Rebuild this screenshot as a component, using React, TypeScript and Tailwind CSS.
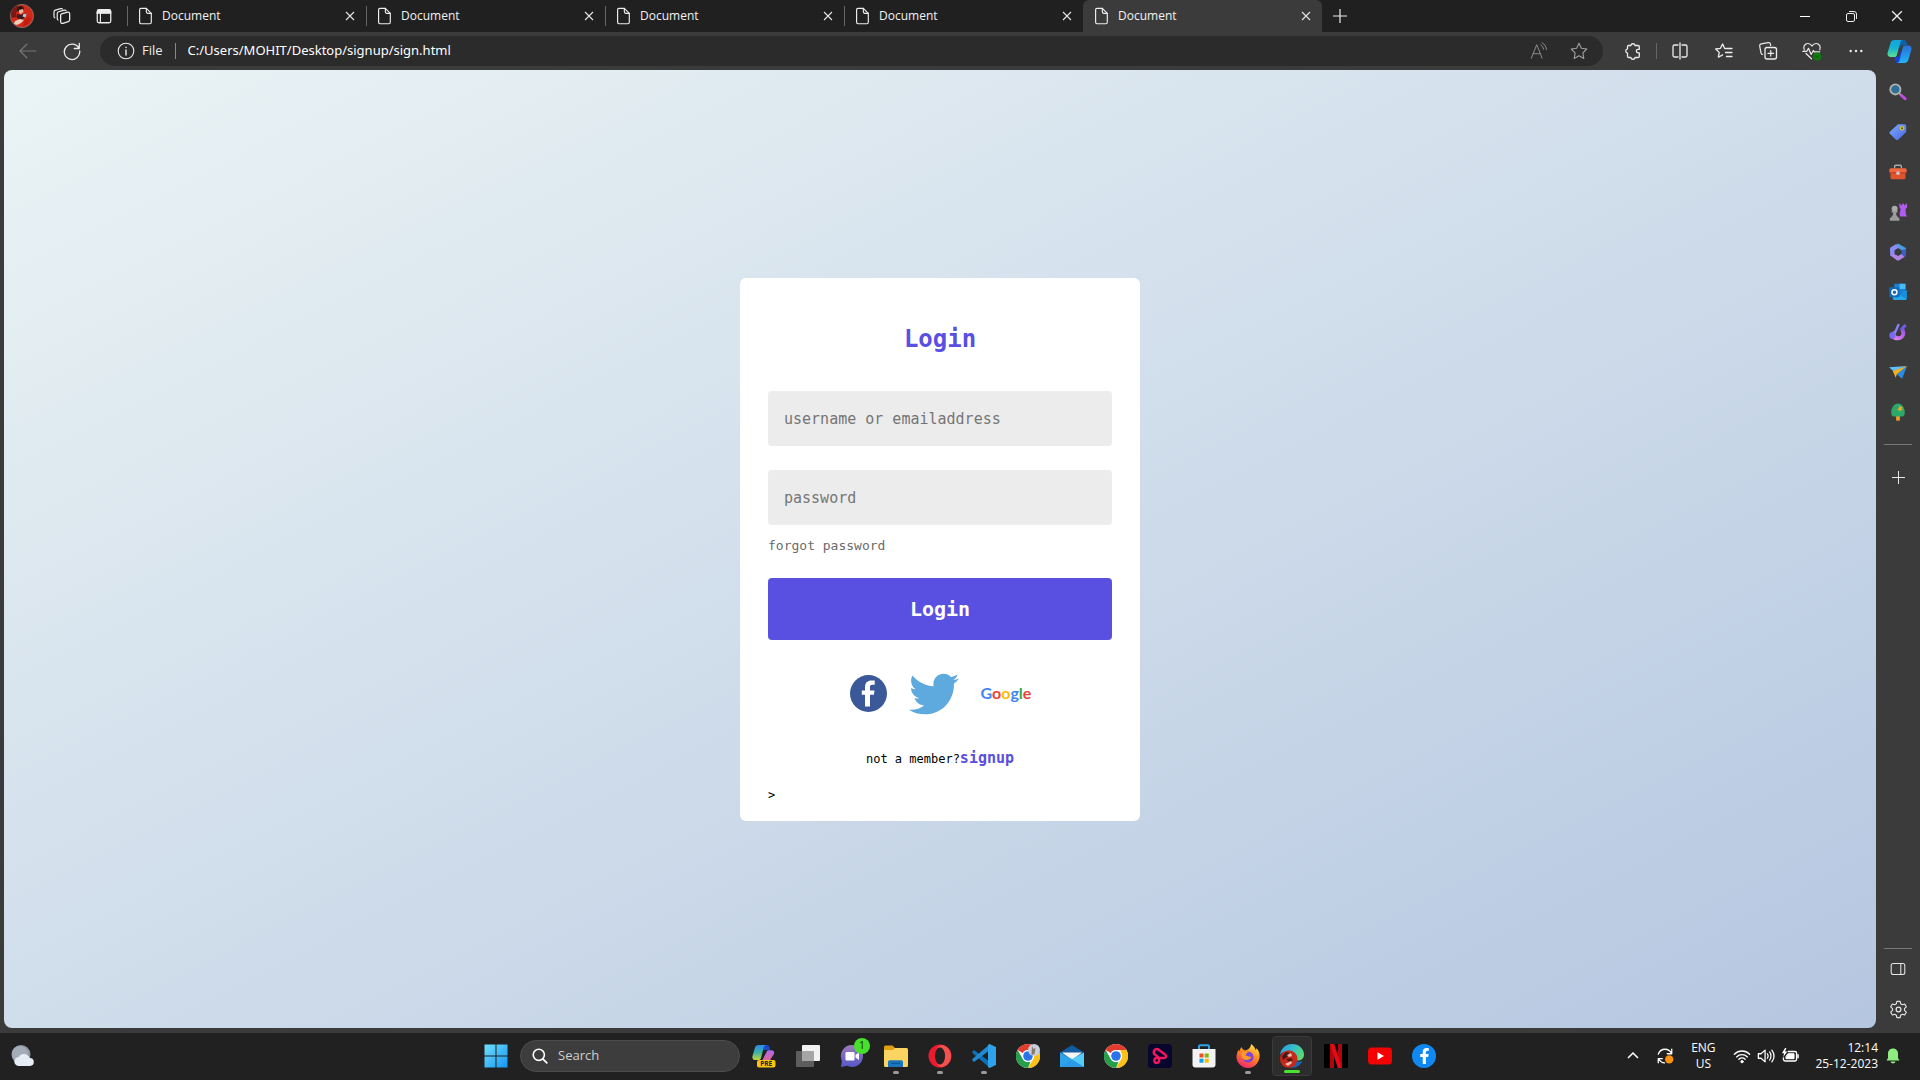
import React from "react";
import { FaTwitter, FaFacebookF } from "react-icons/fa";

const UI = "font-['Open_Sans','Noto_Sans',sans-serif]";
const MONO = "font-['DejaVu_Sans_Mono','Liberation_Mono',monospace]";

type IconProps = { size?: number; children: React.ReactNode; className?: string };

/** Thin-stroked icon on a 20-unit grid. */
function Line({ size = 20, children, className = "" }: IconProps) {
  return (
    <svg
      width={size}
      height={size}
      viewBox="0 0 20 20"
      fill="none"
      stroke="currentColor"
      strokeWidth="1.1"
      strokeLinecap="round"
      strokeLinejoin="round"
      className={className}
      aria-hidden="true"
    >
      {children}
    </svg>
  );
}

/** Filled icon on a 24-unit grid. */
function Art({ size = 24, children, className = "" }: IconProps) {
  return (
    <svg width={size} height={size} viewBox="0 0 24 24" className={className} aria-hidden="true">
      {children}
    </svg>
  );
}

function Avatar({ size = 24 }: { size?: number }) {
  return (
    <Art size={size}>
      <circle cx="12" cy="12" r="11.6" fill="#d22a18" stroke="#8b7a76" strokeWidth=".8" />
      <path d="M1 9C2 5 5 2 8 1.4L9 6 6 9l1 4-5 1C1.200 13 .8 11 1 9z" fill="#7a1a12" />
      <path d="M8 3c2-2 5-1 6 1l-1 3-4 1-2-3z" fill="#2b1512" />
      <path d="M9 6l4-1 .5 3-2.500 2-2-1z" fill="#e8b49c" />
      <path d="M7 10l4 1 3-2 2 3-4 4-5-2z" fill="#351d22" />
      <path d="M13.500 9.500l3 1-1 3-3-1z" fill="#b6c7d6" />
      <path d="M5 17l5-2 4 1-3 3-4 2-3-1z" fill="#f2cdb9" />
      <path d="M14 17l4-4 3 1-3 6-5 3z" fill="#c21d10" />
    </Art>
  );
}

function PageIcon() {
  return (
    <Line size={18} className="shrink-0">
      <path d="M5.500 1.500h6L17 7v10a1.600 1.600 0 0 1-1.600 1.600h-9.900A1.600 1.600 0 0 1 4 17V3.100A1.600 1.600 0 0 1 5.500 1.500z" strokeWidth="1.300" />
      <path d="M11.500 1.500V5.400A1.600 1.600 0 0 0 13 7h4" strokeWidth="1.300" />
    </Line>
  );
}

function CloseIcon({ size = 10 }: { size?: number }) {
  return (
    <svg width={size} height={size} viewBox="0 0 10 10" stroke="currentColor" strokeWidth="1.1" aria-hidden="true">
      <path d="M1 1l8 8M9 1L1 9" />
    </svg>
  );
}

function Tab({ active = false }: { active?: boolean }) {
  return (
    <div
      className={
        active
          ? "flex h-8 w-[239px] items-center rounded-t-md bg-[#3b3b3b] pr-1.5 pl-[9px]"
          : "flex h-8 w-[239px] items-center pr-1.5"
      }
    >
      {!active && <span className="mr-2 h-5 w-px bg-[#666]" />}
      <PageIcon />
      <span className="ml-2 flex-1 text-xs text-[#f2f2f2]">Document</span>
      <button aria-label="Close tab" className="flex h-5 w-5 items-center justify-center text-[#e6e6e6]">
        <CloseIcon />
      </button>
    </div>
  );
}

function TabStrip() {
  return (
    <header className="flex h-8 items-center bg-[#202020] text-[#ededed]">
      <button aria-label="Profile" className="flex w-11 justify-center">
        <Avatar />
      </button>
      <button aria-label="Workspaces" className="flex w-9 justify-center">
        <Line size={18}>
          <path d="M9.500 7.700l6.800-1.900c1.400-.3 2.200.3 2.200 1.600v6.800c0 1-.5 1.700-1.500 2l-6 1.900c-1.500.4-2.500-.2-2.500-1.600V9.300c0-.8.300-1.400 1-1.600z" strokeWidth="1.400" />
          <path d="M5.600 14.500c-.6-.3-.9-.8-.9-1.700V7.300c0-1 .5-1.700 1.500-2L12.500 3.500c.9-.2 1.600 0 2 .6" strokeWidth="1.300" />
          <path d="M2 12c-.6-.3-.9-.8-.9-1.700V5.500c0-1 .5-1.700 1.500-2L8.500 1.800c.9-.2 1.500-.1 2 .4" strokeWidth="1.300" />
        </Line>
      </button>
      <button aria-label="Tab actions" className="flex w-[47px] justify-center">
        <Line size={18}>
          <rect x="2.500" y="3" width="15" height="14.500" rx="2" strokeWidth="1.400" />
          <path d="M2.500 5.200A2.200 2.200 0 0 1 4.700 3h10.600a2.200 2.200 0 0 1 2.200 2.200V7h-15z" fill="currentColor" />
          <path d="M6 7v10" strokeWidth="1.300" />
        </Line>
      </button>
      <nav className="flex" aria-label="Tabs">
        <Tab />
        <Tab />
        <Tab />
        <Tab />
        <Tab active />
      </nav>
      <button aria-label="New tab" className="flex w-9 justify-center">
        <svg width="14" height="14" viewBox="0 0 14 14" stroke="currentColor" strokeWidth="1.200" aria-hidden="true">
          <path d="M7 0v14M0 7h14" />
        </svg>
      </button>
      <div className="ml-auto flex">
        <button aria-label="Minimize" className="flex h-8 w-[46px] items-center justify-center">
          <span className="h-px w-2.5 bg-white" />
        </button>
        <button aria-label="Restore" className="flex h-8 w-[46px] items-center justify-center">
          <svg width="11" height="11" viewBox="0 0 11 11" fill="none" stroke="currentColor" aria-hidden="true">
            <rect x=".5" y="2.500" width="8" height="8" rx="1.500" />
            <path d="M3 .5h5A2.500 2.500 0 0 1 10.500 3v5" />
          </svg>
        </button>
        <button aria-label="Close" className="flex h-8 w-[46px] items-center justify-center">
          <CloseIcon size={12} />
        </button>
      </div>
    </header>
  );
}

function CopilotIcon({ size = 25 }: { size?: number }) {
  return (
    <Art size={size}>
      <defs>
        <linearGradient id="cpA" x1="0" y1="0" x2="0" y2="1">
          <stop offset="0" stopColor="#12a5dc" />
          <stop offset=".5" stopColor="#18b3cf" />
          <stop offset="1" stopColor="#5fe08c" />
        </linearGradient>
        <linearGradient id="cpB" x1="0" y1="0" x2="0" y2="1">
          <stop offset="0" stopColor="#2a6fd6" />
          <stop offset="1" stopColor="#1fb4f6" />
        </linearGradient>
      </defs>
      <path d="M12 1h4c1.600 0 2.300 1 2.700 2.300L19.600 6h-4.400c-1.200 0-2 .6-2.300 1.700L12 10z" fill="#0f62a8" />
      <path d="M7 17h4l2-6 1 8-1 3.500c-.3.400-.8.500-1.200.5H10c-1.400 0-2-.8-2.400-2z" fill="#1b3fd0" />
      <path d="M7 1h8c-1.300.3-1.900 1.300-2.300 2.600L9.600 15c-.4 1.500-1.300 2.200-2.800 2.200H3.300C1 17.200 0 15.300.6 13L3.500 3.500C4 2 5.200 1 7 1z" fill="url(#cpA)" />
      <path d="M17 23H9.800c1.300-.3 1.900-1.300 2.300-2.600L15 8.500c.4-1.500 1.300-2.200 2.800-2.200h2.900c2.300 0 3.300 1.900 2.700 4.200l-2.900 9.500C20 22 18.800 23 17 23z" fill="url(#cpB)" />
    </Art>
  );
}

const toolBtn = "flex h-8 w-11 items-center justify-center";

function Toolbar() {
  return (
    <div className="flex h-[38px] items-center bg-[#3b3b3b] text-[#ededed]">
      <button aria-label="Back" className="flex w-14 justify-center text-[#777]">
        <Line size={20}>
          <path d="M18 10H2M9 3l-7 7 7 7" />
        </Line>
      </button>
      <button aria-label="Refresh" className="mr-3 flex w-8 justify-center">
        <Line size={20}>
          <path d="M17 7.500A7.700 7.700 0 1 0 17.700 10M17.300 2.500v5h-5" strokeWidth="1.300" />
        </Line>
      </button>
      <div className="flex h-[30px] flex-1 items-center rounded-full bg-[#2b2b2b] pr-1">
        <button className="flex items-center pl-4 text-[13px]">
          <Line size={20} className="mr-1.5">
            <circle cx="10" cy="10" r="7.800" />
            <path d="M10 9v5M10 6.200v.3" strokeWidth="1.400" />
          </Line>
          File
        </button>
        <span className="mx-3 h-4 w-px bg-[#888]" />
        <input
          aria-label="Address"
          defaultValue="C:/Users/MOHIT/Desktop/signup/sign.html"
          className="min-w-0 flex-1 bg-transparent font-['Noto_Sans',sans-serif] text-[13px] text-white outline-none"
        />
        <button aria-label="Read aloud" className="flex w-10 justify-center text-[#8c8c8c]">
          <Line size={18}>
            <path d="M1.500 18L7.500 3l6 15M3.500 13h8M12 3.500c1.800.8 2.800 2.300 2.900 4.500M13.500 1c2.900 1.300 4.500 3.900 4.700 7.500" />
          </Line>
        </button>
        <button aria-label="Add to favorites" className="flex w-10 justify-center text-[#a0a0a0]">
          <Line size={20}>
            <path d="M10 2.200l2.400 5 5.400.8-3.900 3.900.9 5.500-4.800-2.600-4.800 2.600.9-5.500L2.200 8l5.400-.8z" />
          </Line>
        </button>
      </div>
      <div className="flex items-center pl-2">
        <button aria-label="Extensions" className={toolBtn}>
          <Line size={20}>
            <path d="M5.500 4.500h2.300a2.200 2.200 0 0 1 4.300 0h2.900c.8 0 1.300.5 1.300 1.300V8.300h-1.200a1.700 1.700 0 0 0 0 3.600h1.200v3.300c0 .8-.5 1.300-1.300 1.300h-2.900a2.200 2.200 0 0 1-4.300 0H5.800c-.8 0-1.300-.5-1.300-1.300v-3a2.200 2.200 0 0 1 0-4.300V5.800c0-.8.400-1.300 1-1.300z" strokeWidth="1.300" />
          </Line>
        </button>
        <span className="mx-px h-4 w-px bg-[#666]" />
        <button aria-label="Split screen" className={toolBtn}>
          <Line size={20}>
            <path d="M8 4H4.500A1.500 1.500 0 0 0 3 5.500v9A1.500 1.500 0 0 0 4.500 16H8M12 4h3.500A1.500 1.500 0 0 1 17 5.500v9a1.500 1.500 0 0 1-1.500 1.500H12M10 2v16" strokeWidth="1.300" />
          </Line>
        </button>
        <button aria-label="Favorites" className={toolBtn}>
          <Line size={20}>
            <path d="M11.500 7.500h-.8L8.600 3 6.400 7.300l-4.700.7 3.500 3.400-.8 4.800 4.200-2.300M12.500 7.500H18M11.500 11.500H18M12.500 15.500H18" strokeWidth="1.300" />
          </Line>
        </button>
        <button aria-label="Collections" className={toolBtn}>
          <Line size={20}>
            <rect x="7" y="6.500" width="11.500" height="11.500" rx="2" strokeWidth="1.300" />
            <path d="M12.750 9.500v5.600M9.950 12.300h5.600M4.600 13.500c-.9-.2-1.400-.8-1.600-1.700L1.700 5.200c-.2-1.100.4-2 1.500-2.300l7-1.300c1.100-.2 2 .4 2.300 1.500l.2 1.200" strokeWidth="1.200" />
          </Line>
        </button>
        <button aria-label="Browser essentials" className={toolBtn}>
          <Line size={20}>
            <path d="M2.200 8.800C.8 5.300 3 2.500 5.800 2.500c1.800 0 3.200.9 4.200 2.500 1-1.600 2.400-2.500 4.200-2.500 2.800 0 5 2.800 3.600 6.300M.8 10.300h4l1.700-3 2.600 6.200 2.300-4 .9 1.300h5.400M4 12.500l5.500 5.300" strokeWidth="1.200" />
            <circle cx="15.300" cy="15.500" r="4" fill="#0f7b0f" stroke="none" />
            <path d="M13.800 15.500l1.100 1.100 2-2.200" stroke="#0a4d0a" strokeWidth=".8" />
          </Line>
        </button>
        <button aria-label="Settings and more" className={toolBtn}>
          <svg width="14" height="4" viewBox="0 0 14 4" fill="currentColor" aria-hidden="true">
            <circle cx="1.700" cy="2" r="1.200" />
            <circle cx="7" cy="2" r="1.200" />
            <circle cx="12.300" cy="2" r="1.200" />
          </svg>
        </button>
        <button aria-label="Copilot" className="flex h-8 w-[42px] items-center justify-center">
          <CopilotIcon />
        </button>
      </div>
    </div>
  );
}

const sideIcons: { label: string; art: React.ReactNode }[] = [
  {
    label: "Search",
    art: (
      <>
        <path d="M16 16l5.500 5" stroke="#c54be8" strokeWidth="4" strokeLinecap="round" />
        <path d="M13 13l3 3" stroke="#999" strokeWidth="2" />
        <circle cx="8.500" cy="8.500" r="6.800" fill="#2d6f96" stroke="#b5b3ae" strokeWidth="2.400" />
      </>
    ),
  },
  {
    label: "Shopping",
    art: (
      <>
        <defs>
          <linearGradient id="tag" x1="0" y1="0" x2="1" y2="1">
            <stop offset="0" stopColor="#7cb0ff" />
            <stop offset="1" stopColor="#4b62e4" />
          </linearGradient>
        </defs>
        <path d="M12 1.500h8.500A2.500 2.500 0 0 1 23 4v8L12.500 22a2.500 2.500 0 0 1-3.500 0L1.500 14.700a2.500 2.500 0 0 1 0-3.500z" fill="url(#tag)" />
        <circle cx="17.500" cy="7" r="2.300" fill="#4b5a35" stroke="#e6c62b" strokeWidth="1.600" />
      </>
    ),
  },
  {
    label: "Tools",
    art: (
      <>
        <path d="M7.500 7V4.500C7.500 3.500 8 3 9 3h6c1 0 1.500.5 1.500 1.500V7" fill="none" stroke="#aaa" strokeWidth="1.800" />
        <rect x="2" y="12" width="20" height="9.500" rx="1.500" fill="#e0532c" />
        <rect x=".5" y="7" width="23" height="6.500" rx="2" fill="#f2673d" />
        <rect x=".5" y="12.500" width="23" height="1.300" fill="#a93517" />
        <circle cx="12" cy="13.500" r="2.400" fill="#c9c9c9" />
      </>
    ),
  },
  {
    label: "Games",
    art: (
      <>
        <path d="M13.500 1h2v2h2V1h2.500v2h2V1h2v5l-2 2 .5 7 1.500 3h-9l-1-3 1.500-7-1.500-2z" fill="#b15cf0" />
        <circle cx="7.500" cy="7.500" r="4" fill="#aaa" />
        <path d="M3.500 10.500h8v2h-2c0 3 .5 5 3.500 7 1.500 1 1.500 4 0 4H2c-1.500 0-1.500-3 0-4 3-2 3.500-4 3.500-7h-2z" fill="#9b9b9b" />
      </>
    ),
  },
  {
    label: "Microsoft 365",
    art: (
      <>
        <path d="M12 .5L22.500 6.500v6.500l-6-3.500-4.500-2.500-4.500 2.500v5l-6-3.500V6.500z" fill="#4a9ddf" />
        <path d="M9 1.500L2.500 5.500c-.7.5-1 1-1 1.700v9.300l6 3V9.500L13 6z" fill="#8f8af0" />
        <path d="M22.500 7.500v9c0 .7-.3 1.200-1 1.600L12 23.500l-4-3 8.500-6v-5z" fill="#3c5ec9" />
        <path d="M2 16.500l5.500-2L12 17l4.500-2.500 4 4-7 4.500c-1 .5-2 .5-3 0z" fill="#b384e4" />
        <path d="M12 7l4.500 2.500v5L12 17l-4.500-2.500v-5z" fill="#3b3b3b" />
      </>
    ),
  },
  {
    label: "Outlook",
    art: (
      <>
        <rect x="7" y="1" width="15" height="14" rx="1" fill="#1a80d6" />
        <path d="M14 1h8v7h-8z" fill="#46bdf2" />
        <path d="M5 12l9.500 4L23.500 9v12a1.500 1.500 0 0 1-1.500 1.500H6.500A1.500 1.500 0 0 1 5 21z" fill="#28a8ea" />
        <path d="M14.500 16l9-6v11.500z" fill="#1490df" />
        <rect x=".5" y="5.500" width="13.500" height="13.500" rx="1.300" fill="#0f6cbd" />
        <circle cx="7.300" cy="12.200" r="3.300" fill="none" stroke="#fff" strokeWidth="2" />
      </>
    ),
  },
  {
    label: "Designer",
    art: (
      <>
        <defs>
          <linearGradient id="des" x1="0" y1="1" x2="1" y2="0">
            <stop offset="0" stopColor="#f08cf0" />
            <stop offset="1" stopColor="#9a4be8" />
          </linearGradient>
        </defs>
        <path d="M20.500 8.500c3.500 6-1 14.500-9 14.500C6 23 2.500 20 2 15.500 4 12 7 10 10 9l10.500-.5z" fill="url(#des)" />
        <circle cx="12.500" cy="13.500" r="4" fill="#3b3b3b" />
        <path d="M9 8.500h7l-1 4-6 2z" fill="#3b3b3b" />
        <path d="M12.500 2.500L7.500 14" stroke="#8c84f5" strokeWidth="3" strokeLinecap="round" />
        <ellipse cx="4.500" cy="16.500" rx="4" ry="4.500" fill="#7a68ee" />
        <path d="M22 1l.5 2.500L24 5l-2.500.8L20 9l-3 1-2.500-2L17 5l2-2z" fill="#6c5de8" />
      </>
    ),
  },
  {
    label: "Drop",
    art: (
      <>
        <path d="M24 4l-6.500 17-7.500-6.500z" fill="#2b8be6" />
        <path d="M0 5.500L24 4 6 11z" fill="#5fbdf7" />
        <path d="M5 10.500L24 4 10.500 14.500 9 19.500z" fill="#f5b21f" />
      </>
    ),
  },
  {
    label: "E-tree",
    art: (
      <>
        <rect x="9.500" y="17" width="5" height="6.500" fill="#f0a020" />
        <path d="M12 .5c6 0 9.500 7 9 13 0 3-2 4.500-4.500 4.500h-9C5 18 3 16.500 3 13.500 2.500 7.500 6 .5 12 .5z" fill="#2ea86a" />
        <path d="M14 3l1.500 2 2.500.2-.8 2.300 1 2.300-2.500-.1L14 11.500l-.8-2-2.200-.9 2-1.500z" fill="#f2a51e" />
      </>
    ),
  },
];

const sideBtn = "flex h-10 w-full items-center justify-center";

function Sidebar() {
  return (
    <aside className="flex w-11 flex-col items-center pt-0.5 pb-1 text-[#e6e6e6]">
      {sideIcons.map((item) => (
        <button key={item.label} aria-label={item.label} className={sideBtn}>
          <Art size={18}>{item.art}</Art>
        </button>
      ))}
      <span className="my-3 h-px w-7 bg-[#777]" />
      <button aria-label="Customize" className={sideBtn}>
        <svg width="13" height="13" viewBox="0 0 13 13" stroke="currentColor" aria-hidden="true">
          <path d="M6.500 0v13M0 6.500h13" />
        </svg>
      </button>
      <span className="mt-auto h-px w-7 bg-[#777]" />
      <button aria-label="Hide sidebar" className={sideBtn}>
        <Line size={16}>
          <rect x="1.500" y="3" width="17" height="14" rx="2.500" strokeWidth="1.300" />
          <path d="M13.500 3v14" strokeWidth="1.300" />
        </Line>
      </button>
      <button aria-label="Sidebar settings" className={sideBtn}>
        <Line size={19}>
          <circle cx="10" cy="10" r="2.500" strokeWidth="1.300" />
          <path d="M8.300 1.500h3.400l.6 2.500 1.700 1 2.500-.8 1.700 3-1.900 1.800v2l1.900 1.800-1.700 3-2.500-.8-1.700 1-.6 2.500H8.300L7.700 16 6 15l-2.500.8-1.700-3L3.700 11V9L1.800 7.200l1.700-3L6 5l1.700-1z" strokeWidth="1.200" />
        </Line>
      </button>
    </aside>
  );
}

const field =
  "h-[55px] w-full rounded bg-[#ececec] px-4 pt-0.5 text-[15px] text-[#333] outline-none placeholder:text-[#757575]";

function LoginCard() {
  return (
    <form
      className={`${MONO} flex w-[400px] flex-col rounded-md bg-white px-7 pt-[45px] pb-4 text-black`}
      onSubmit={(e) => e.preventDefault()}
    >
      <h1 className="mb-9 text-center text-2xl font-bold text-[#5950e2]">Login</h1>
      <input aria-label="username or emailaddress" placeholder="username or emailaddress" className={field} />
      <input type="password" aria-label="password" placeholder="password" className={`${field} mt-6`} />
      <a href="#forgot" className="mt-[11px] self-start text-[13px] leading-5 text-[#6b6b6b]">
        forgot password
      </a>
      <button className="mt-[22px] h-[62px] w-full rounded bg-[#5950e2] text-xl font-bold text-white">Login</button>
      <div className="mt-7 flex h-[52px] items-center justify-center gap-[22px]">
        <a href="#facebook" aria-label="Facebook">
          <svg width="37" height="37" viewBox="0 0 37 37" aria-hidden="true">
            <circle cx="18.500" cy="18.500" r="18.500" fill="#3b5998" />
            <path d="M15 31.500V19.800h-3.200v-4.300H15v-3.300c0-4.700 2.600-6.800 6.500-6.800 1.300 0 2.500.1 3.200.2v4.100h-2.300c-1.900 0-2.400.9-2.400 2.300v3.500h4.500l-.6 4.300H20v11.700z" fill="#fff" />
          </svg>
        </a>
        <a href="#twitter" aria-label="Twitter">
          <FaTwitter size={50} color="#5ea9dd" aria-hidden="true" />
        </a>
        <a href="#google" className="mb-0.5 w-[50px] font-['Lato',sans-serif] text-base leading-6 font-bold">
          <span className="text-[#4285f4]">G</span>
          <span className="text-[#ea4335]">o</span>
          <span className="text-[#fbbc05]">o</span>
          <span className="text-[#4285f4]">g</span>
          <span className="text-[#34a853]">l</span>
          <span className="text-[#ea4335]">e</span>
        </a>
      </div>
      <p className="mt-7 text-center text-xs leading-5">
        not a member?
        <a href="#signup" className="text-[15px] font-bold text-[#5950e2]">
          signup
        </a>
      </p>
      <p className="mt-4 text-xs leading-5">&gt;</p>
    </form>
  );
}

function ChromeArt() {
  return (
    <>
      <circle cx="12" cy="12" r="12" fill="#fff" />
      <path d="M12 0a12 12 0 0 1 10.400 6H12a6 6 0 0 0-5.200 3L1.600 6A12 12 0 0 1 12 0z" fill="#e33b2e" />
      <path d="M22.400 6A12 12 0 0 1 12 24l5.200-9A6 6 0 0 0 17.200 9l-.9-3z" fill="#fbc116" />
      <path d="M1.600 6l5.200 9a6 6 0 0 0 5.200 3l2.600-.6L12 24A12 12 0 0 1 1.600 6z" fill="#269f4b" />
      <circle cx="12" cy="12" r="6" fill="#fff" />
      <circle cx="12" cy="12" r="4.800" fill="#2a73e8" />
    </>
  );
}

type App = { label: string; art: React.ReactNode; state?: "open" | "active"; badge?: string };

const apps: App[] = [
  {
    label: "Copilot preview",
    art: (
      <>
        <defs>
          <linearGradient id="pvA" x1="0" y1="0" x2="0" y2="1">
            <stop offset="0" stopColor="#2c8be8" />
            <stop offset=".5" stopColor="#3ab4a4" />
            <stop offset="1" stopColor="#c5d63a" />
          </linearGradient>
          <linearGradient id="pvB" x1="0" y1="0" x2="0" y2="1">
            <stop offset="0" stopColor="#a76bf0" />
            <stop offset="1" stopColor="#f0647e" />
          </linearGradient>
        </defs>
        <path d="M11 1h4c1.500 0 2 1 2.500 2.500L18 6h-7z" fill="#1c49c8" />
        <path d="M6.500 1H14c-1.500.5-2 1.500-2.300 2.600L9 14c-.4 1.500-1.300 2-2.800 2H3C.8 16 0 14.300.5 12L3 3.500C3.500 2 4.800 1 6.500 1z" fill="url(#pvA)" />
        <path d="M16 19H9l5.500-11c.5-1.300 1.300-1.700 2.500-1.700h2.500c2.300 0 3 1.500 2.500 3.700z" fill="url(#pvB)" />
        <rect x="5" y="16" width="18.500" height="7.500" rx="2" fill="#fbc40f" />
        <text x="14.200" y="22.200" textAnchor="middle" fontSize="6.500" fontWeight="700" fill="#222">
          PRE
        </text>
      </>
    ),
  },
  {
    label: "Task view",
    art: (
      <>
        <rect x="6" y="1" width="18" height="16" rx="1" fill="#f2f2f2" />
        <rect x="0" y="7" width="18" height="16" rx="1" fill="#5d5d5d" />
        <path d="M6 7h12v10H6z" fill="#a5a5a5" />
      </>
    ),
  },
  {
    label: "Chat",
    badge: "1",
    art: (
      <>
        <defs>
          <linearGradient id="chat" x1="0" y1="0" x2="0" y2="1">
            <stop offset="0" stopColor="#9d7bb8" />
            <stop offset="1" stopColor="#5558c9" />
          </linearGradient>
        </defs>
        <path d="M12 1a11 11 0 1 1-5 20.800L1.500 23 1 22l1-5A11 11 0 0 1 12 1z" fill="url(#chat)" />
        <rect x="5.500" y="8" width="9" height="8.500" rx="1.300" fill="#fff" />
        <path d="M15.500 11l3.500-2.500v7.500l-3.500-2.500z" fill="#fff" />
      </>
    ),
  },
  {
    label: "File Explorer",
    state: "open",
    art: (
      <>
        <path d="M0 3a1.500 1.500 0 0 1 1.500-1.500h7L11 4H23v4H0z" fill="#e0a010" />
        <path d="M0 6h9l2-2h11.500A1.500 1.500 0 0 1 24 5.500v16a1.500 1.500 0 0 1-1.500 1.500h-21A1.500 1.500 0 0 1 0 21.500z" fill="#fcd462" />
        <path d="M4 23v-5a1.800 1.800 0 0 1 1.800-1.800h11.400A1.800 1.800 0 0 1 19 18v5z" fill="#1877bd" />
        <path d="M7 19.300h9" stroke="#0d5a94" strokeWidth="1.300" />
      </>
    ),
  },
  {
    label: "Opera",
    state: "open",
    art: (
      <>
        <circle cx="12" cy="12" r="11.500" fill="#e81c2e" />
        <path d="M15 1a11.500 11.500 0 0 1 0 22c-3 .3-5-1-6-3 5 2 8-2 8-8s-3-10-8-8c1-2 3-3 6-3z" fill="#f0524f" />
        <ellipse cx="12" cy="12" rx="5" ry="8.500" fill="#222" />
      </>
    ),
  },
  {
    label: "Visual Studio Code",
    state: "open",
    art: (
      <>
        <path d="M0 8l2-2 16 12v6L1 9.500z" fill="#0f6fb8" />
        <path d="M0 16l2 2L18 6V0L1 14.500z" fill="#2288d2" />
        <path d="M17.500 0L24 3v18l-6.500 3-1.500-1V1z" fill="#2ea3ec" />
      </>
    ),
  },
  {
    label: "Chrome profile",
    art: (
      <>
        <ChromeArt />
        <circle cx="18" cy="6" r="6" fill="#c7d0dc" />
        <path d="M16 2l1.500 3 2-1-1 6-3 1z" fill="#867968" />
      </>
    ),
  },
  {
    label: "Mail",
    art: (
      <>
        <path d="M0 8.500L12 1l12 7.500v3H0z" fill="#115a9e" />
        <path d="M2 8.500h20L12 16z" fill="#f5f5f5" />
        <path d="M0 8.500l24 13V23H0z" fill="#2da4ea" />
        <path d="M24 8.500V23L11 15.500z" fill="#55cdf8" />
        <path d="M0 23l12-7.500L24 23z" fill="#2b9be8" />
      </>
    ),
  },
  { label: "Chrome", art: <ChromeArt /> },
  {
    label: "Clipchamp",
    art: (
      <>
        <rect width="24" height="24" rx="3.500" fill="#06062f" />
        <path
          d="M6 10C5 6 8 3.500 11 6l6 4.500c2 1.700 1 3.500-1 3.500H9c-3.500 0-3.500 5-.5 5 2.500 0 3-2.500 2.500-4.500C10.500 12 7 11 6.500 10"
          fill="none"
          stroke="#f5165e"
          strokeWidth="2.400"
          strokeLinecap="round"
          strokeLinejoin="round"
        />
      </>
    ),
  },
  {
    label: "Microsoft Store",
    art: (
      <>
        <path d="M7 6V2.500C7 1.800 7.300 1.300 8 1.300h8c.7 0 1 .5 1 1.200V6" fill="none" stroke="#2da4e8" strokeWidth="2" />
        <path d="M.5 5h23v15.500a3 3 0 0 1-3 3h-17a3 3 0 0 1-3-3z" fill="#f3f3f3" />
        <path d="M7.500 9.500h4v4h-4z" fill="#f25022" />
        <path d="M12.700 9.500h4v4h-4z" fill="#7fba00" />
        <path d="M7.500 14.700h4v4h-4z" fill="#0aa0ea" />
        <path d="M12.700 14.700h4v4h-4z" fill="#ffb900" />
      </>
    ),
  },
  {
    label: "Firefox",
    state: "open",
    art: (
      <>
        <defs>
          <linearGradient id="ff" x1=".8" y1="0" x2=".3" y2="1">
            <stop offset="0" stopColor="#ffe84a" />
            <stop offset=".45" stopColor="#ff8a1e" />
            <stop offset="1" stopColor="#f5246e" />
          </linearGradient>
        </defs>
        <path d="M15 0c3 2 4 4 4.500 6 1-.5 1-1.500 1-2C23 7 24 10 23.500 13.500 22.500 19.500 18 24 12 24S.5 19 .5 13c0-3 1-5 2-7.500l.5 2C4 6 4.500 4 5.500 3c.5 2 2 3 3.500 3.500 3-.5 6-3 6-6.500z" fill="url(#ff)" />
        <circle cx="12" cy="13" r="5.500" fill="#7b45d8" />
        <path d="M5 9c2-2 5-1.500 7.500-.5-2 .5-3 1.500-3 3 3 0 3 2 6 1-1 4-7 5-9.500 1z" fill="#ff9a28" />
      </>
    ),
  },
  {
    label: "Edge",
    state: "active",
    art: (
      <>
        <defs>
          <linearGradient id="edge" x1="0" y1=".3" x2="1" y2=".7">
            <stop offset="0" stopColor="#2aa0dc" />
            <stop offset=".5" stopColor="#35c1c9" />
            <stop offset="1" stopColor="#62dc62" />
          </linearGradient>
        </defs>
        <path d="M9 23c6 2 11-1 13.500-6-4 2-9 0-8-4L6 10z" fill="#1565b8" />
        <path d="M0 11C.5 4.500 6 0 12 0c7 0 12 5 12 10.500 0 4-3 6-6.500 6-3 0-4-1-3-2.500 2-3-1-6.500-5-6.500S1.500 8 0 11z" fill="url(#edge)" />
        <circle cx="8.700" cy="15" r="8.700" fill="#c8281a" />
        <path d="M2 12l4-4 4 1-3 4-4 3zM6 15l5-1 2 2-4 2z" fill="#4a1512" />
        <path d="M7 11l4-2 1 3-3 1zM5 20l6-3 1 2-4 3z" fill="#e8bda9" />
      </>
    ),
  },
  {
    label: "Netflix",
    art: (
      <>
        <path d="M0 0h24v24H0z" fill="#000" />
        <path d="M6 0h4v24H6zM14 0h4v24h-4z" fill="#b00610" />
        <path d="M6 0h4.200L18 24h-4.200z" fill="#e50914" />
      </>
    ),
  },
  {
    label: "YouTube",
    art: (
      <>
        <rect x="0" y="3.500" width="24" height="17" rx="4" fill="#f60002" />
        <path d="M9.500 8.300l6.500 3.700-6.500 3.700z" fill="#fff" />
      </>
    ),
  },
  {
    label: "Facebook",
    art: (
      <>
        <circle cx="12" cy="12" r="12" fill="#0f88f2" />
        <g transform="translate(4.500 4)">
          <FaFacebookF size={16} color="#fff" />
        </g>
      </>
    ),
  },
];

function TaskApp({ app }: { app: App }) {
  const active = app.state === "active";
  return (
    <button
      aria-label={app.label}
      className={
        active
          ? "relative mx-0.5 flex h-10 w-10 items-center justify-center rounded border border-[#3a3a3a] bg-[#2d2d2d]"
          : "relative flex h-10 w-11 items-center justify-center"
      }
    >
      <Art>{app.art}</Art>
      {app.state === "open" && <span className="absolute bottom-0.5 h-[3px] w-1.5 rounded-full bg-[#9a9a9a]" />}
      {active && <span className="absolute bottom-0.5 h-[3px] w-4 rounded-full bg-[#4be331]" />}
      {app.badge && (
        <span className="absolute top-0.5 right-1 flex h-4 w-4 items-center justify-center rounded-full bg-[#47e02c] text-[11px] text-[#14350c]">
          {app.badge}
        </span>
      )}
    </button>
  );
}

function Taskbar() {
  return (
    <footer className="flex h-[47px] items-center bg-[#212121] pb-0.5 text-white">
      <div className="flex flex-1 items-center px-2.5">
        <button aria-label="Weather">
          <Art size={24}>
            <circle cx="11" cy="10.500" r="9.500" fill="#8c97a3" />
            <circle cx="10" cy="10" r="8" fill="#a4adb7" />
            <path d="M9 22a4.500 4.500 0 0 1-.3-9 6 6 0 0 1 10.900 1A4 4 0 0 1 20 22z" fill="#e6edf5" />
          </Art>
        </button>
      </div>
      <div className="flex items-center">
        <button aria-label="Start" className="flex h-10 w-11 items-center justify-center">
          <Art size={24}>
            <defs>
              <linearGradient id="win" x1="0" y1="0" x2="1" y2="1" gradientUnits="objectBoundingBox">
                <stop offset="0" stopColor="#71e0fb" />
                <stop offset="1" stopColor="#1593f5" />
              </linearGradient>
            </defs>
            <path d="M.5.5h11v11H.5zM12.500.5h11v11h-11zM.5 12.500h11v11H.5zM12.500 12.500h11v11h-11z" fill="url(#win)" />
          </Art>
        </button>
        <label className="mx-0.5 flex h-8 w-[220px] items-center rounded-full border border-[#4c4c4c] bg-[#3d3d3d] pl-[11px]">
          <Line size={16}>
            <circle cx="8.500" cy="8.500" r="7" strokeWidth="2" />
            <path d="M13.500 13.500l5 5" strokeWidth="2.200" />
          </Line>
          <input
            aria-label="Search"
            placeholder="Search"
            className="ml-2.5 min-w-0 flex-1 bg-transparent text-[13px] outline-none placeholder:text-[#cfcfcf]"
          />
        </label>
        {apps.map((app) => (
          <TaskApp key={app.label} app={app} />
        ))}
      </div>
      <div className="flex flex-1 items-center justify-end pr-5 text-xs leading-4">
        <button aria-label="Show hidden icons" className="flex w-8 justify-center">
          <svg width="12" height="7" viewBox="0 0 12 7" fill="none" stroke="currentColor" strokeWidth="1.500" aria-hidden="true">
            <path d="M1 6l5-5 5 5" />
          </svg>
        </button>
        <button aria-label="Updates" className="flex w-8 justify-center">
          <Line size={18}>
            <path d="M2.500 8C4 4 7 2.500 10 2.500c3.500 0 6 2 7.500 5M17.500 2.500v5h-5M2.500 17.500v-4.500h4.500M3 13c1.500 3 3.500 4.500 6.500 4.700" strokeWidth="1.400" />
            <circle cx="14.700" cy="13.800" r="4.600" fill="#fb930d" stroke="none" />
          </Line>
        </button>
        <button className="w-11 text-center">
          ENG
          <br />
          US
        </button>
        <button aria-label="Network, volume and battery" className="mx-1 flex items-center gap-1.5 pl-1">
          <Line size={18}>
            <path d="M1.500 8a12 12 0 0 1 17 0M4 11a8.500 8.500 0 0 1 12 0M6.500 13.700a5 5 0 0 1 7 0" strokeWidth="1.500" />
            <circle cx="10" cy="16.300" r="1.300" fill="currentColor" />
          </Line>
          <Line size={18}>
            <path d="M1.500 7.500h3L9 3.500v13l-4.500-4h-3zM11.500 7.500c1 1.500 1 3.500 0 5M14 5.500c2 2.500 2 6.500 0 9M16.500 3.500c3 4 3 9 0 13" strokeWidth="1.400" />
          </Line>
          <Line size={18}>
            <path d="M8 5h7.500A1.800 1.800 0 0 1 17.300 6.800v6.900a1.800 1.800 0 0 1-1.800 1.800h-11a1.800 1.800 0 0 1-1.800-1.800V12M19 8.500v3.500" strokeWidth="1.500" />
            <path d="M8 7.500h6.500V13H5.500v-2z" fill="currentColor" />
            <path d="M4.500 1L1 7h2.500L2.500 11 7 5H4.500L6 1z" fill="currentColor" stroke="none" />
          </Line>
        </button>
        <button className="ml-3 text-right">
          12:14
          <br />
          25-12-2023
        </button>
        <button aria-label="Notifications" className="ml-2">
          <svg width="14" height="16" viewBox="0 0 14 16" fill="#8eec80" aria-hidden="true">
            <path d="M7 .5c3 0 5 2.200 5 5V10l1.500 2.500H.5L2 10V5.500c0-2.800 2-5 5-5zM4.500 13.500h5c-.4 1.300-1.300 2-2.500 2s-2.100-.7-2.500-2z" />
          </svg>
        </button>
      </div>
    </footer>
  );
}

export default function App() {
  return (
    <div className={`${UI} flex min-h-screen flex-col bg-[#3b3b3b]`}>
      <TabStrip />
      <Toolbar />
      <div className="flex flex-1 pl-1">
        <main className="mb-[5px] flex flex-1 items-center justify-center rounded-lg bg-linear-to-br from-[#ebf4f5] to-[#b5c6e0]">
          <LoginCard />
        </main>
        <Sidebar />
      </div>
      <Taskbar />
    </div>
  );
}
